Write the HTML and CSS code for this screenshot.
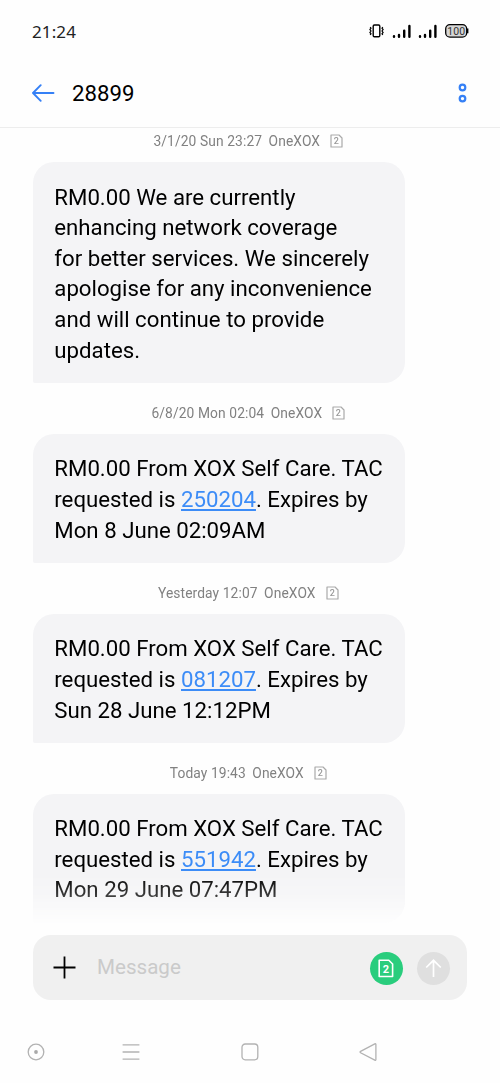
FILE: index.html
```html
<!DOCTYPE html>
<html lang="en">
<head>
<meta charset="utf-8">
<title>28899</title>
<link rel="stylesheet" href="styles.css">
</head>
<body>
<div class="screen">
  <header class="status">
    <span class="clock">21:24</span>
    <div class="indicators">
      <svg class="vibrate" viewBox="0 0 15 14" fill="none" stroke="#000"><rect x="4.2" y="1" width="6.6" height="11.8" rx="1.2" stroke-width="1.4"/><path d="M1.2 3L2 4.2L.9 5.6L2 7L.9 8.4L2 9.8L1.2 11M13.8 3L13 4.2L14.1 5.6L13 7L14.1 8.4L13 9.8L13.8 11" stroke-width="1.2"/></svg>
      <svg class="signal" viewBox="0 0 19 15"><path d="M2 12.2V12.8M7 11V12.8M12.2 6.6V12.8M17.4 2V12.8"/></svg>
      <svg class="signal second" viewBox="0 0 19 15"><path d="M2 12.2V12.8M7 11V12.8M12.2 6.6V12.8M17.4 2V12.8"/></svg>
      <svg class="battery" viewBox="0 0 24 14"><rect x=".7" y=".7" width="21" height="12.4" rx="4.2" fill="#d6d6d6" stroke="#000" stroke-width="1.3"/><path d="M22.7 4.6V9.2" stroke="#000" stroke-width="1.4"/><text class="battery-level" x="11.2" y="10.7" text-anchor="middle">100</text></svg>
    </div>
  </header>
  <nav class="titlebar">
    <svg class="back" viewBox="0 0 24 18" fill="none" stroke="#3580f6" stroke-width="1.9"><path d="M21.5 9H2M8.7 1.2L1 9L8.7 16.8" stroke-linecap="round" stroke-linejoin="round"/></svg>
    <h1 class="title">28899</h1>
    <svg class="more" viewBox="0 0 10 20" fill="none" stroke="#3580f6" stroke-width="2.2"><circle cx="4.5" cy="4.5" r="2.8"/><circle cx="4.5" cy="15.6" r="2.8"/></svg>
  </nav>
  <main class="thread">
    <div class="stamp first"><span>3/1/20 Sun 23:27</span><span>OneXOX</span><svg viewBox="0 0 13 14"><path d="M1 1H9L12 4V13H1Z"/><text x="6.4" y="10" text-anchor="middle">2</text></svg></div>
    <p class="bubble">RM0.00 We are currently<br>enhancing network coverage<br>for better services. We sincerely<br>apologise for any inconvenience<br>and will continue to provide<br>updates.</p>
    <div class="stamp"><span>6/8/20 Mon 02:04</span><span>OneXOX</span><svg viewBox="0 0 13 14"><path d="M1 1H9L12 4V13H1Z"/><text x="6.4" y="10" text-anchor="middle">2</text></svg></div>
    <p class="bubble">RM0.00 From XOX Self Care. TAC<br>requested is <a class="code">250204</a>. Expires by<br>Mon 8 June 02:09AM</p>
    <div class="stamp"><span>Yesterday 12:07</span><span>OneXOX</span><svg viewBox="0 0 13 14"><path d="M1 1H9L12 4V13H1Z"/><text x="6.4" y="10" text-anchor="middle">2</text></svg></div>
    <p class="bubble">RM0.00 From XOX Self Care. TAC<br>requested is <a class="code">081207</a>. Expires by<br>Sun 28 June 12:12PM</p>
    <div class="stamp"><span>Today 19:43</span><span>OneXOX</span><svg viewBox="0 0 13 14"><path d="M1 1H9L12 4V13H1Z"/><text x="6.4" y="10" text-anchor="middle">2</text></svg></div>
    <p class="bubble">RM0.00 From XOX Self Care. TAC<br>requested is <a class="code">551942</a>. Expires by<br>Mon 29 June 07:47PM</p>
  </main>
  <section class="composer">
    <svg class="plus" viewBox="0 0 23 23" stroke="#000" stroke-width="1.8"><path d="M.5 11.5H22.5M11.5 .5V22.5"/></svg>
    <span class="placeholder">Message</span>
    <div class="round sim-pick"><svg class="sim-icon" viewBox="0 0 16 19" fill="none" stroke="#fff" stroke-width="1.6"><path d="M1.2 1.2H10.8L14.6 5V17.5H1.2Z" stroke-linejoin="round"/><text class="sim-pick-digit" x="7.9" y="13.7" text-anchor="middle">2</text></svg></div>
    <div class="round send"><svg class="arrow" viewBox="0 0 17 19" fill="none" stroke="#fff" stroke-width="1.7"><path d="M8.5 18V1.5M1.2 8.5L8.5 1.3L15.8 8.5"/></svg></div>
  </section>
  <footer class="navkeys">
    <svg viewBox="0 0 18 18"><circle cx="9" cy="9" r="7.8"/><circle class="dot" cx="9" cy="9" r="1.9"/></svg>
    <svg class="menu" viewBox="0 0 18 18"><path d="M.6 1.9H17.4M.6 9H17.4M.6 16.1H17.4"/></svg>
    <svg class="home" viewBox="0 0 18 18"><rect x="1" y="1" width="15.8" height="15.8" rx="3.2"/></svg>
    <svg class="prev" viewBox="0 0 18 18"><path d="M15.8.9Q16.9.4 16.9 1.5V16.5Q16.9 17.7 15.8 17.2L1.6 9.8Q.6 9 1.6 8.3Z"/></svg>
  </footer>
</div>
</body>
</html>
```

FILE: styles.css
```css
* { box-sizing: border-box; }
body { margin: 0; background: #fefefe; font-family: Roboto, "Liberation Sans", sans-serif; color: #000; }
.screen { width: 500px; height: 1083px; display: flex; flex-direction: column; overflow: hidden; }
svg { display: block; flex: none; }

.status { height: 62px; padding: 0 31.5px 0 32px; display: flex; justify-content: space-between; align-items: center; }
.clock { font-family: "Noto Sans", sans-serif; font-size: 17px; color: #222; letter-spacing: .1px; }
.indicators { display: flex; align-items: center; }
.vibrate { width: 15px; height: 14px; }
.signal { width: 19px; height: 15px; margin-left: 8px; fill: none; stroke: #000; stroke-width: 2.4; stroke-linecap: round; }
.signal.second { margin-left: 7px; }
.battery { width: 24px; height: 14px; margin-left: 7.5px; }
.battery-level { font: 10.5px Roboto, sans-serif; fill: #333; }

.titlebar { height: 66px; padding: 0 32px 3px; display: flex; align-items: center; border-bottom: 1px solid #ededed; }
.back { width: 24px; height: 18px; }
.title { margin: 0 0 1px 16px; font-size: 22.2px; font-weight: 400; flex: 1; }
.more { width: 10px; height: 20px; }

.thread { height: 795px; overflow: hidden; padding-left: 33.3px; -webkit-mask-image: linear-gradient(#000 746px, rgba(0,0,0,.75) 769px, rgba(0,0,0,.3) 783px, transparent 797px); mask-image: linear-gradient(#000 746px, rgba(0,0,0,.75) 769px, rgba(0,0,0,.3) 783px, transparent 797px); }
.stamp { height: 51px; width: 430px; display: flex; align-items: center; justify-content: center; padding-top: 9px; font-size: 13.8px; color: #818181; letter-spacing: .1px; }
.stamp.first { height: 34px; padding-top: 0; padding-bottom: 8px; }
.stamp span + span { margin-left: 6.5px; }
.stamp svg { width: 13px; height: 14px; margin-left: 10px; }
.stamp path { fill: none; stroke: #a9a9a9; stroke-width: 1.2; stroke-linejoin: round; }
.stamp text { font: 500 9px Roboto, sans-serif; fill: #999; }
.bubble { width: 372px; margin: 0; padding: 19.6px 0 17.6px 21px; font-size: 22.22px; line-height: 30.6px; white-space: nowrap; background: #f4f4f6; border-radius: 21px 21px 21px 2px; }
.code { color: #3c8cf7; text-decoration: underline; text-decoration-thickness: 1.5px; text-underline-offset: 2px; }

.composer { height: 64.5px; margin: 12px 33.3px 0 33.3px; padding: 0 16.5px 0 20.2px; display: flex; align-items: center; background: #f0f0f0; border-radius: 18px; }
.plus { width: 23px; height: 23px; }
.placeholder { flex: 1; margin-left: 20.5px; font-size: 20.6px; color: #cacaca; }
.round { width: 33.5px; height: 33.5px; margin-top: 2px; border-radius: 50%; display: grid; place-items: center; }
.sim-pick { background: #29cd7d; }
.sim-icon { width: 16px; height: 19px; }
.sim-pick-digit { font: 700 11px Roboto, sans-serif; fill: #fff; stroke: none; }
.send { margin-left: 13.5px; background: #dfdfdf; }
.arrow { width: 17px; height: 19px; }

.navkeys { flex: 1; padding: 43.5px 0 0 26.5px; display: flex; }
.navkeys svg { width: 18px; height: 18px; fill: none; stroke: #b2b2b2; stroke-width: 1.3; }
.navkeys .menu { margin-left: 77px; }
.navkeys .home { margin-left: 101.5px; }
.navkeys .prev { margin-left: 100px; }
.navkeys .dot { fill: #a9a9a9; stroke: none; }
```
